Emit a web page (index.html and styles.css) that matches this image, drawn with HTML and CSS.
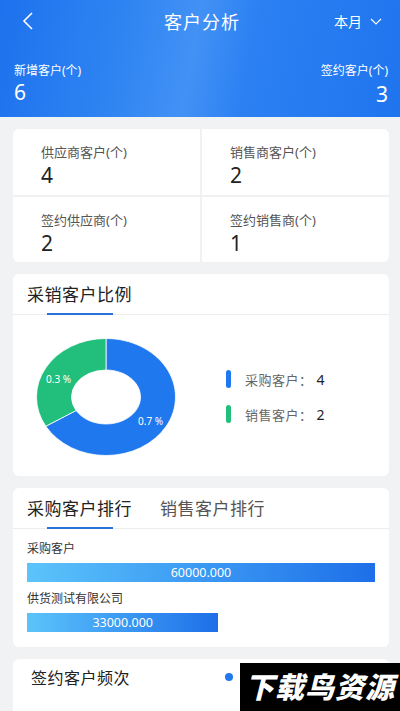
FILE: index.html
```html
<!DOCTYPE html>
<html lang="zh">
  <head>
    <meta charset="UTF-8" />
    <meta name="viewport" content="width=device-width, initial-scale=1.0" />
    <title>客户分析</title>
    <link rel="stylesheet" href="styles.css">
  </head>
  <body>
    <div class="header">
      <div class="nav">
        <div class="back">
          <svg width="12" height="18" viewBox="0 0 12 18"><path d="M10 1 L2 9 L10 17" fill="none" stroke="#fff" stroke-width="1.6"/></svg>
        </div>
        <div class="title">客户分析</div>
        <div class="month">本月
          <svg width="12" height="7" viewBox="0 0 12 7"><path d="M1 1 L6 6 L11 1" fill="none" stroke="#fff" stroke-width="1.2"/></svg>
        </div>
      </div>
      <div class="summary">
        <div class="sum-item">
          <div class="sum-label">新增客户(个)</div>
          <div class="sum-value">6</div>
        </div>
        <div class="sum-item right">
          <div class="sum-label">签约客户(个)</div>
          <div class="sum-value">3</div>
        </div>
      </div>
    </div>

    <div class="card grid">
      <div class="cell"><div class="cell-label">供应商客户(个)</div><div class="cell-value">4</div></div>
      <div class="cell"><div class="cell-label">销售商客户(个)</div><div class="cell-value">2</div></div>
      <div class="cell"><div class="cell-label">签约供应商(个)</div><div class="cell-value">2</div></div>
      <div class="cell"><div class="cell-label">签约销售商(个)</div><div class="cell-value">1</div></div>
    </div>

    <div class="card">
      <div class="card-head">
        <div class="tab active">采销客户比例</div>
      </div>
      <div class="chart-body">
        <div class="donut">
          <svg width="140" height="118" viewBox="0 0 140 118">
            <path d="M70 0.5 A69.5 58.5 0 1 1 9.81 88.25 L40.12 72.5 A34.5 27 0 1 0 70 32 Z" fill="#1f78ee" stroke="#fff" stroke-width="0.8"/>
            <path d="M70 0.5 A69.5 58.5 0 0 0 9.81 88.25 L40.12 72.5 A34.5 27 0 0 1 70 32 Z" fill="#22bf7c" stroke="#fff" stroke-width="0.8"/>
          </svg>
          <span class="pct pct-green">0.3 %</span>
          <span class="pct pct-blue">0.7 %</span>
        </div>
        <div class="legend">
          <div class="legend-item"><i class="mark blue"></i>采购客户：<b>4</b></div>
          <div class="legend-item"><i class="mark green"></i>销售客户：<b>2</b></div>
        </div>
      </div>
    </div>

    <div class="card">
      <div class="card-head">
        <div class="tab active">采购客户排行</div>
        <div class="tab">销售客户排行</div>
      </div>
      <div class="rank-body">
        <div class="rank-name">采购客户</div>
        <div class="bar" style="width: 100%">60000.000</div>
        <div class="rank-name">供货测试有限公司</div>
        <div class="bar" style="width: 55%">33000.000</div>
      </div>
    </div>

    <div class="card last">
      <div class="freq-head">
        <div class="freq-title">签约客户频次</div>
        <i class="dot"></i>
      </div>
    </div>

    <div class="watermark">下载鸟资源</div>
  </body>
</html>
```

FILE: styles.css
```css
* {
  margin: 0;
  padding: 0;
  box-sizing: border-box;
}

body {
  font-family: "Noto Sans", "Noto Sans CJK SC", sans-serif;
  background-color: #f1f2f4;
  width: 400px;
  height: 711px;
  overflow: hidden;
  position: relative;
}

.header {
  height: 117px;
  color: #fff;
  background: linear-gradient(100deg, #1d72ee 0%, #2f84f2 30%, #4291f5 48%, #2c80f2 62%, #1f75ef 100%);
}

.nav {
  height: 42px;
  display: flex;
  align-items: center;
  justify-content: space-between;
  padding: 0 18px 0 22px;
}

.back {
  width: 60px;
  display: flex;
  align-items: center;
}

.title {
  font-size: 18px;
  letter-spacing: 1px;
}

.month {
  width: 60px;
  display: flex;
  align-items: center;
  justify-content: flex-end;
  gap: 8px;
  font-size: 14px;
}

.summary {
  display: flex;
  justify-content: space-between;
  padding: 21px 12px 0 14px;
}

.sum-label {
  font-size: 12px;
  line-height: 16px;
}

.sum-value {
  font-size: 21px;
  line-height: 26px;
}

.sum-item.right {
  text-align: right;
}

.sum-item.right .sum-value {
  margin-top: 2px;
}

.card {
  margin: 12px 11px 0 13px;
  background-color: #fff;
  border-radius: 6px;
  overflow: hidden;
}

.grid {
  display: grid;
  grid-template-columns: 1fr 1fr;
  gap: 2px;
  background-color: #f0f1f3;
  height: 133px;
}

.cell {
  background-color: #fff;
  padding: 15px 0 0 28px;
}

.cell-label {
  font-size: 13px;
  line-height: 17px;
  color: #555;
}

.cell-value {
  font-size: 21px;
  line-height: 28px;
  color: #222;
}

.card-head {
  height: 41px;
  display: flex;
  gap: 28px;
  padding: 0 14px;
  border-bottom: 1px solid #ececec;
}

.tab {
  position: relative;
  font-size: 17px;
  letter-spacing: 0.5px;
  line-height: 41px;
  color: #555;
}

.tab.active {
  color: #222;
}

.tab.active::after {
  content: "";
  position: absolute;
  bottom: -1px;
  left: 50%;
  width: 66px;
  margin-left: -33px;
  height: 2px;
  background-color: #2a72d9;
}

.chart-body {
  display: flex;
  align-items: center;
  height: 161px;
  padding-left: 23px;
  gap: 50px;
}

.donut {
  position: relative;
  width: 140px;
  height: 118px;
  margin-top: 2px;
}

.donut svg {
  display: block;
}

.pct {
  position: absolute;
  font-size: 10px;
  color: #fff;
  line-height: 12px;
}

.pct-green {
  left: 10px;
  top: 35px;
}

.pct-blue {
  left: 102px;
  top: 77px;
}

.legend {
  display: flex;
  flex-direction: column;
  gap: 16px;
  margin-top: 2px;
}

.legend-item {
  display: flex;
  align-items: center;
  font-size: 13px;
  color: #666;
  letter-spacing: 0.5px;
}

.legend-item b {
  font-weight: normal;
  color: #222;
  margin-left: 4px;
  font-size: 14px;
}

.mark {
  width: 5px;
  height: 18px;
  border-radius: 3px;
  margin-right: 14px;
}

.mark.blue {
  background-color: #1f78ee;
}

.mark.green {
  background-color: #22bf7c;
}

.rank-body {
  padding: 12px 14px 15px 14px;
}

.rank-name {
  font-size: 12px;
  line-height: 16px;
  color: #333;
  margin-bottom: 6px;
}

.bar {
  height: 19px;
  line-height: 19px;
  text-align: center;
  color: #fff;
  font-size: 12.5px;
  background: linear-gradient(90deg, #5cc4fa 0%, #3b99f3 50%, #1e6fe8 100%);
  margin-bottom: 9px;
}

.bar:last-child {
  margin-bottom: 0;
}

.last {
  height: 80px;
}

.freq-head {
  display: flex;
  align-items: center;
  height: 36px;
  padding-left: 18px;
}

.freq-title {
  font-size: 16px;
  color: #222;
  letter-spacing: 0.5px;
  width: 194px;
}

.dot {
  width: 8px;
  height: 8px;
  border-radius: 50%;
  background-color: #1f78ee;
}

.watermark {
  position: absolute;
  right: 0;
  bottom: 0;
  width: 160px;
  height: 48px;
  background-color: #000;
  color: #fff;
  font-size: 29px;
  font-weight: 900;
  font-style: italic;
  line-height: 48px;
  text-align: center;
  letter-spacing: 1px;
}
```
